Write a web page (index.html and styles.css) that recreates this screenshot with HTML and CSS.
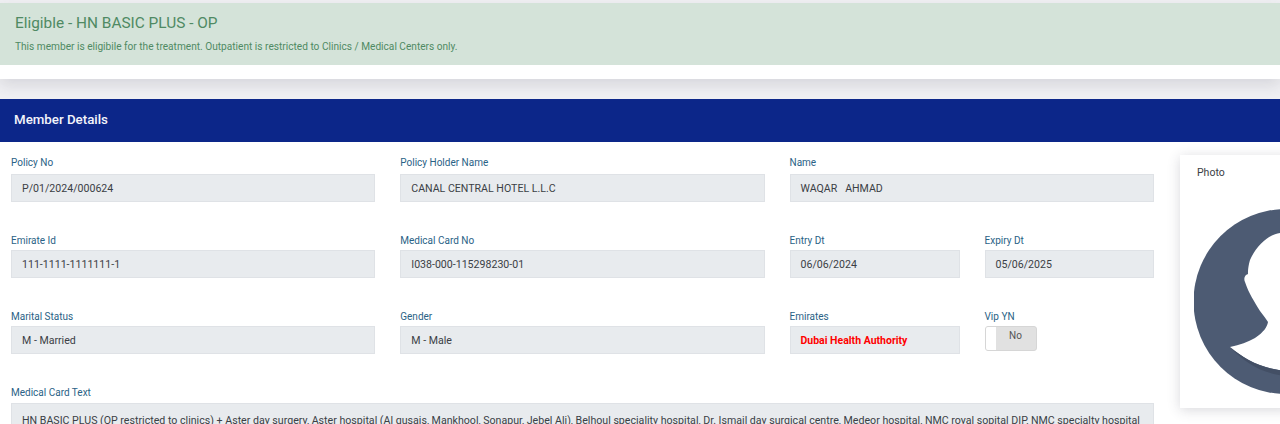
FILE: index.html
```html
<!DOCTYPE html>
<html lang="en">
<head>
<meta charset="utf-8">
<title>Member Details</title>
<link rel="stylesheet" href="styles.css">
</head>
<body>
<section class="status-card">
  <div class="alert">
    <h4 class="alert-title">Eligible - HN BASIC PLUS - OP</h4>
    <p class="alert-text">This member is eligibile for the treatment. Outpatient is restricted to Clinics / Medical Centers only.</p>
  </div>
</section>
<section class="details">
  <h2 class="details-header">Member Details</h2>
  <div class="details-body">
    <div class="form">
      <div class="field field-first"><label class="label">Policy No</label><div class="input">P/01/2024/000624</div></div>
      <div class="field field-first"><label class="label">Policy Holder Name</label><div class="input">CANAL CENTRAL HOTEL L.L.C</div></div>
      <div class="field field-first"><label class="label">Name</label><div class="input">WAQAR&nbsp;&nbsp; AHMAD</div></div>

      <div class="field"><label class="label">Emirate Id</label><div class="input">111-1111-1111111-1</div></div>
      <div class="field"><label class="label">Medical Card No</label><div class="input">I038-000-115298230-01</div></div>
      <div class="split">
        <div class="field"><label class="label">Entry Dt</label><div class="input">06/06/2024</div></div>
        <div class="field"><label class="label">Expiry Dt</label><div class="input">05/06/2025</div></div>
      </div>

      <div class="field"><label class="label">Marital Status</label><div class="input">M - Married</div></div>
      <div class="field"><label class="label">Gender</label><div class="input">M - Male</div></div>
      <div class="split">
        <div class="field"><label class="label">Emirates</label><div class="input input-alert">Dubai Health Authority</div></div>
        <div class="field"><label class="label">Vip YN</label>
          <div class="toggle"><span class="toggle-knob"></span><span class="toggle-text">No</span></div>
        </div>
      </div>

      <div class="field field-wide"><label class="label">Medical Card Text</label><div class="input input-text">HN BASIC PLUS (OP restricted to clinics) + Aster day surgery, Aster hospital (Al qusais, Mankhool, Sonapur, Jebel Ali), Belhoul speciality hospital, Dr. Ismail day surgical centre, Medeor hospital, NMC royal sopital DIP, NMC specialty hospital</div></div>
    </div>
    <aside class="photo-card">
      <div class="photo-label">Photo</div>
      <svg class="avatar" viewBox="0 0 184 185" width="184" height="185" aria-hidden="true">
        <circle cx="92" cy="92.5" r="92.5" fill="#4d5b73"/>
        <path d="M36 138 C50 150 68 160 92 162 L184 162 L184 24 L86 24 C75 25 62 37 56 51 C54 58 54 62 54 65 L52 66 C50 68 50 71 51 73 C55 85 60 92 66 102 C70 107 72 110 74 113 C73 118 70 123 61 129 C54 133 46 136 36 138 Z" fill="#ffffff"/>
        <path d="M36 138 C50 153 68 165 92 167 L184 167 L184 162 L92 162 C68 160 50 150 36 138 Z" fill="#434f65"/>
      </svg>
    </aside>
  </div>
</section>
</body>
</html>
```
FILE: styles.css
```css
* { box-sizing: border-box; }
html, body { height: 424px; overflow: hidden; }
body {
  margin: 0;
  background: #f0f0f3;
  font-family: Roboto, "Liberation Sans", sans-serif;
  color: #343a40;
}
.status-card {
  margin-top: 3px;
  height: 76px;
  background: #fff;
  box-shadow: 0 6px 14px rgba(60, 60, 80, .14);
}
.alert {
  height: 62px;
  padding: 11px 15px 0;
  background: #d4e3d9;
  color: #4f8a63;
}
.alert-title {
  margin: 0;
  font-size: 15.4px;
  line-height: 18px;
  font-weight: 400;
}
.alert-text {
  margin: 9px 0 0;
  font-size: 10.15px;
  line-height: 12px;
}
.details {
  margin-top: 20px;
  background: #fff;
  height: 325px;
  overflow: hidden;
}
.details-header {
  margin: 0;
  height: 43px;
  padding-left: 14px;
  background: #0c2689;
  color: #f4f4fb;
  font-size: 13.3px;
  font-weight: 500;
  line-height: 41px;
}
.details-body {
  display: flex;
  align-items: flex-start;
  height: 282px;
  padding: 13px 0 0 11px;
  overflow: hidden;
}
.form {
  flex: 0 0 1143px;
  display: grid;
  grid-template-columns: repeat(3, 364.25px);
  column-gap: 25px;
  row-gap: 32px;
  padding-top: 1px;
}
.split {
  display: grid;
  grid-template-columns: 170px 169.25px;
  column-gap: 25px;
}
.field { min-width: 0; }
.field-wide { grid-column: 1 / -1; }
.label {
  display: block;
  height: 16px;
  font-size: 10px;
  line-height: 13px;
  color: #2a6286;
}
.field-first .label { height: 18px; }
.field-wide .label { height: 17px; }
.input {
  height: 28px;
  padding: 0 10px;
  background: #e8ebee;
  border: 1px solid #dfe2e6;
  font-size: 10.6px;
  line-height: 28px;
  color: #3b4045;
  white-space: nowrap;
  overflow: hidden;
}
.input-alert {
  color: #f00;
  font-weight: 700;
  font-size: 10.5px;
}
.input-text {
  height: 21px;
  border-bottom: 0;
  padding-top: 3px;
  font-size: 10.63px;
}
.toggle {
  display: flex;
  width: 52px;
  height: 25px;
  background: #e1e1e1;
  border: 1px solid #d6d6d6;
  border-radius: 3px;
  overflow: hidden;
}
.toggle-knob {
  flex: 0 0 10px;
  background: #fff;
}
.toggle-text {
  flex: 1;
  text-align: center;
  font-size: 10px;
  line-height: 18px;
  color: #555;
}
.photo-card {
  flex: 0 0 110px;
  margin-left: 26px;
  height: 253px;
  padding: 11px 0 0 17px;
  background: #fff;
  box-shadow: 0 2px 12px rgba(60, 60, 80, .2);
  overflow: hidden;
}
.photo-label {
  font-size: 10.5px;
  line-height: 13px;
  color: #3b4045;
}
.avatar {
  display: block;
  margin: 30px 0 0 -3px;
}
```
